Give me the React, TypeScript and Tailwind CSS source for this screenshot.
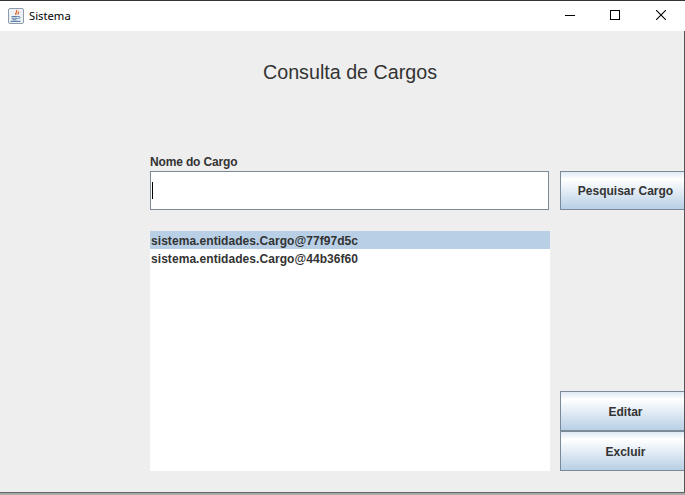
const font = { fontFamily: '"Liberation Sans", Arial, sans-serif' }

function JavaIcon() {
  return (
    <svg width="16" height="16" viewBox="0 0 16 16" className="shrink-0">
      <rect x="0.5" y="0.5" width="15" height="15" rx="1.5" fill="#eef2f6" stroke="#8c9aab" />
      <path d="M8.5 2c1.5 1.8-2 2.8-.5 5M10.5 3.5c.8 1-1.2 1.8-.2 3" fill="none" stroke="#e2682a" strokeWidth="1.3" />
      <path d="M3.5 8.5h6M3.5 10.2h6M4.5 11.8h4" stroke="#5a7fa8" />
      <path d="M9.8 8.5h1.5c1 0 1 1.8-.5 1.9H9.5" fill="none" stroke="#5a7fa8" />
      <path d="M2.5 13.3h10" stroke="#3f6b99" />
    </svg>
  )
}

function SwingButton({ label, className }: { label: string; className?: string }) {
  return (
    <button className={`w-[131px] shrink-0 border border-[#7a8a99] bg-gradient-to-b from-[#dfe9f3] via-white via-[20%] to-[#b8cfe5] pt-px text-xs font-bold text-[#333333] ${className}`}>
      {label}
    </button>
  )
}

export default function App() {
  return (
    <div style={font} className="w-[685px] h-[495px] flex flex-col overflow-hidden bg-[#a9a9a9]">
      {/* title bar */}
      <div className="h-[31px] shrink-0 bg-white border-t border-[#333333] flex items-center justify-between pl-[8px] pr-[1px]">
        <div className="flex items-center gap-[5px]">
          <JavaIcon />
          <span className="text-[11.25px] text-black" style={{ fontFamily: '"Noto Sans", sans-serif' }}>Sistema</span>
        </div>
        <div className="flex items-center pb-[2px]">
          <div className="w-[44px] flex justify-center">
            <svg width="10" height="10" viewBox="0 0 10 10"><path d="M0 5.5h10" stroke="#000" /></svg>
          </div>
          <div className="w-[46px] flex justify-center">
            <svg width="10" height="10" viewBox="0 0 10 10"><rect x="0.5" y="0.5" width="9" height="9" fill="none" stroke="#000" /></svg>
          </div>
          <div className="w-[46px] flex justify-center">
            <svg width="10" height="10" viewBox="0 0 10 10"><path d="M0 0l10 10M10 0L0 10" stroke="#000" strokeWidth="1.1" /></svg>
          </div>
        </div>
      </div>

      {/* window body */}
      <div className="h-[462px] shrink-0 bg-[#eeeeee] border-r border-[#555555] border-b border-b-[#666666] flex flex-col overflow-hidden">
        <h1 className="text-center text-[19.7px] leading-[21px] text-[#333333] mt-[31px] pl-[16px]">Consulta de Cargos</h1>

        <div className="pl-[150px] mt-[72px]">
          <div className="text-xs font-bold leading-[15px] tracking-[-0.15px] text-[#333333]">Nome do Cargo</div>
          <div className="flex gap-[11px] mt-[1px]">
            <div className="w-[399px] h-[39px] shrink-0 bg-white border border-[#7a8a99] flex items-center pl-[1px]">
              <div className="w-px h-[17px] bg-black" />
            </div>
            <SwingButton label="Pesquisar Cargo" className="h-[39px]" />
          </div>

          <div className="flex gap-[10px] mt-[21px]">
            <div className="w-[400px] h-[240px] shrink-0 bg-white text-xs font-bold leading-[18px] tracking-[0.06px] text-[#333333]">
              <div className="h-[18px] bg-[#b8cfe5] pl-px pt-px">sistema.entidades.Cargo@77f97d5c</div>
              <div className="h-[18px] pl-px pt-px">sistema.entidades.Cargo@44b36f60</div>
            </div>
            <div className="flex flex-col justify-end">
              <SwingButton label="Editar" className="h-[40px]" />
              <SwingButton label="Excluir" className="h-[40px]" />
            </div>
          </div>
        </div>
      </div>
    </div>
  )
}
